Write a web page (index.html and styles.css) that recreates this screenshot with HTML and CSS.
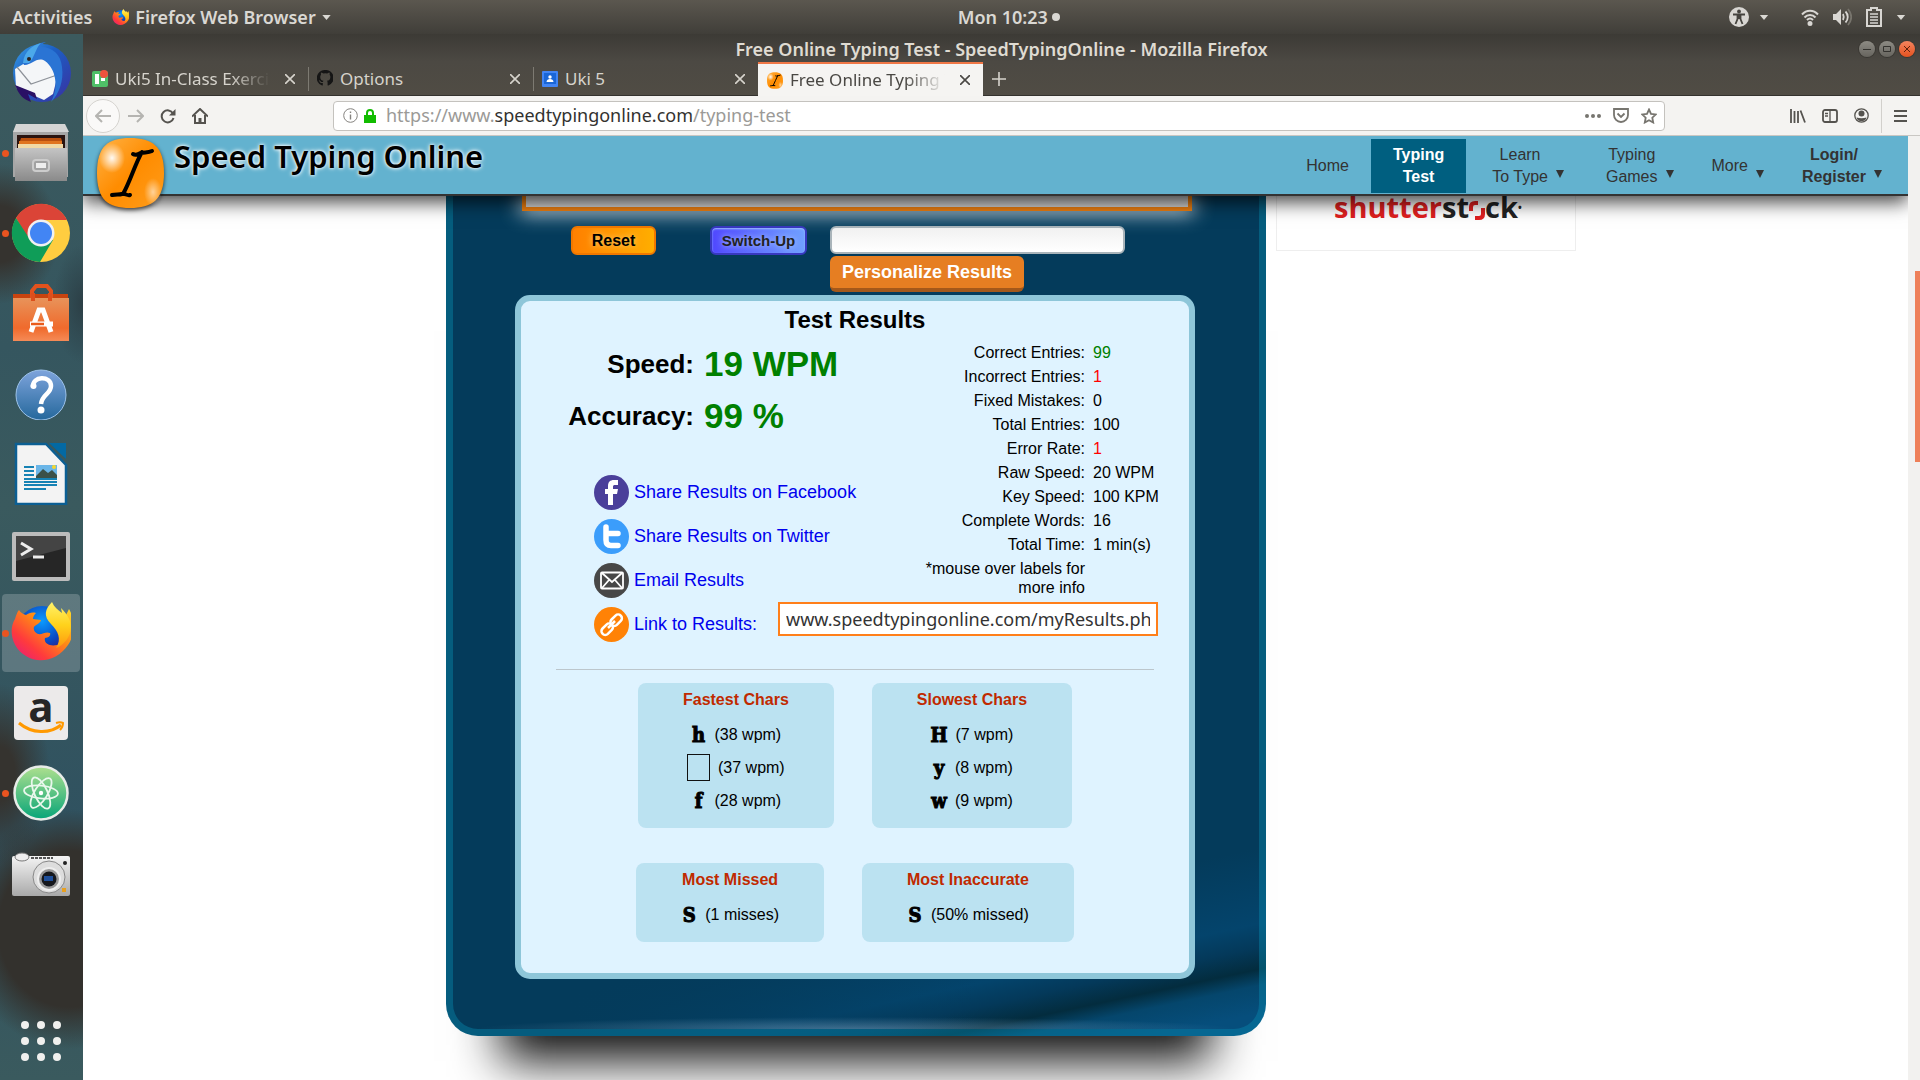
FILE: index.html
```html
<!DOCTYPE html>
<html lang="en">
<head>
<meta charset="utf-8">
<title>Free Online Typing Test - SpeedTypingOnline</title>
<link rel="stylesheet" href="styles.css">
</head>
<body>
<svg width="0" height="0" class="defs" aria-hidden="true">
  <defs>
    <linearGradient id="orangeKey" x1="0" y1="0" x2="1" y2="1"><stop offset="0" stop-color="#ffb347"/><stop offset=".5" stop-color="#ff8c00"/><stop offset="1" stop-color="#ff9d1c"/></linearGradient>
    <radialGradient id="shine"><stop offset="0" stop-color="#fff" stop-opacity=".95"/><stop offset="1" stop-color="#fff" stop-opacity="0"/></radialGradient>
    <linearGradient id="foxBody" x1="1" y1="0" x2="0" y2="1"><stop offset="0" stop-color="#ffdf2b"/><stop offset=".4" stop-color="#ff8a16"/><stop offset=".7" stop-color="#ff3b3c"/><stop offset="1" stop-color="#e31587"/></linearGradient>
    <linearGradient id="foxTail" x1="0" y1="0" x2="0" y2="1"><stop offset="0" stop-color="#fff36b"/><stop offset=".5" stop-color="#ffd21c"/><stop offset="1" stop-color="#ff980e"/></linearGradient>
    <radialGradient id="globe" cx=".5" cy=".3" r=".7"><stop offset="0" stop-color="#0a9bff"/><stop offset=".6" stop-color="#0a49c4"/><stop offset="1" stop-color="#3b1373"/></radialGradient>
    <linearGradient id="bird" x1="0" y1="0" x2="1" y2="1"><stop offset="0" stop-color="#3aa0e8"/><stop offset=".4" stop-color="#1c5fc4"/><stop offset="1" stop-color="#3a2fa0"/></linearGradient>
    <linearGradient id="steel" x1="0" y1="0" x2="0" y2="1"><stop offset="0" stop-color="#c4c4c4"/><stop offset="1" stop-color="#8a8a8a"/></linearGradient>
    <linearGradient id="bag" x1="0" y1="0" x2="0" y2="1"><stop offset="0" stop-color="#e8935a"/><stop offset=".7" stop-color="#f06a2c"/><stop offset="1" stop-color="#f58b57"/></linearGradient>
    <linearGradient id="help" x1="0" y1="0" x2="0" y2="1"><stop offset="0" stop-color="#7ea4dc"/><stop offset="1" stop-color="#25689c"/></linearGradient>
    <linearGradient id="atom" x1="0" y1="0" x2="0" y2="1"><stop offset="0" stop-color="#aee08e"/><stop offset="1" stop-color="#07a578"/></linearGradient>
    <linearGradient id="cam" x1="0" y1="0" x2="0" y2="1"><stop offset="0" stop-color="#f4f4f4"/><stop offset="1" stop-color="#a9a9a9"/></linearGradient>
    <symbol id="firefox" viewBox="0 0 60 62">
      <circle cx="31" cy="29" r="25" fill="url(#globe)"/>
      <path d="M8 8c2 3 4 4 7 5 3-2 6-3 10-2-2 2-3 4-3 6l8 1c0 3-6 5-7 7-1 3 1 6 4 7 4 1 8-3 12-1 1 2-1 5-5 5-2 7 9 10 16 5 6-4 6-12 1-20l7-14c7 12 5 28-1 36-9 14-28 20-42 11C1 46-3 28 4 17c1-3 2-7 4-9z" fill="url(#foxBody)"/>
      <path d="M41 0c-7 7-9 14-1 22 7 7 11 15 5 24 7-2 15-11 15-21 0-7-4-13-10-19l1 5c-4-3-8-6-10-11z" fill="url(#foxTail)"/>
    </symbol>
    <symbol id="key" viewBox="0 0 67 70">
      <path d="M33 0c22 0 34 8 34 35S55 70 33 70 0 62 0 35 11 0 33 0z" fill="url(#orangeKey)"/>
      <ellipse cx="15" cy="20" rx="13" ry="15" fill="url(#shine)"/><ellipse cx="56" cy="54" rx="9" ry="14" fill="url(#shine)" opacity=".6"/>
      <path d="M36 16c3 2 5 0 8-1 4-1 7 0 11-2M45 14C38 26 33 44 26 56M15 57c4-1 7 0 10-1 3-1 5 2 8 1" fill="none" stroke="#000" stroke-width="4" stroke-linecap="round"/>
    </symbol>
    <symbol id="close" viewBox="0 0 10 10"><path d="M0 0l10 10M10 0L0 10" fill="none" stroke="currentColor" stroke-width="1.6"/></symbol>
    <symbol id="caret" viewBox="0 0 10 6"><path d="M0 0h10L5 6z" fill="currentColor"/></symbol>
  </defs>
</svg>

<header class="topbar">
  <div class="topbar-left">
    <button class="plain">Activities</button>
    <button class="plain app-menu"><svg width="17" height="17"><use href="#firefox"/></svg>Firefox Web Browser<svg width="9" height="5"><use href="#caret"/></svg></button>
  </div>
  <button class="plain clock">Mon 10:23<span class="dot"></span></button>
  <div class="topbar-right">
    <svg width="20" height="20" viewBox="0 0 20 20"><circle cx="10" cy="10" r="10" fill="#d8d6d2"/><g stroke="#45433e" stroke-width="1.8" fill="none"><path d="M4 7.500h12M10 8v4M8.500 8v4L6.500 17M11.500 8v4l2 5"/></g><circle cx="10" cy="4.500" r="1.900" fill="#45433e"/></svg>
    <svg class="caret-a" width="10" height="5"><use href="#caret"/></svg>
    <svg width="18" height="17" viewBox="0 0 18 17" fill="none" stroke="#d8d6d2" stroke-width="2"><path d="M1 5.500c4.500-5 11.500-5 16 0M3.500 8.500c3-3.500 8-3.500 11 0M6 11c2-2 4-2 6 0"/><circle cx="9" cy="14.500" r="1.500" fill="#d8d6d2"/></svg>
    <svg width="19" height="18" viewBox="0 0 19 18"><path d="M0 6h3l5-5v16l-5-5H0z" fill="#d8d6d2"/><path d="M10 6c1 2 1 4 0 6M12.500 3.500c3 3 3 8 0 11" fill="none" stroke="#d8d6d2" stroke-width="1.800"/><path d="M15 1c4 5 4 11 0 16" fill="none" stroke="#77746c" stroke-width="1.800"/></svg>
    <svg width="16" height="20" viewBox="0 0 16 20"><path d="M5 1h6v2h4v16H1V3h4z" fill="none" stroke="#d8d6d2" stroke-width="2"/><path d="M4 7h8M4 10h8M4 13h8M4 16h8" stroke="#d8d6d2" stroke-width="1.600"/></svg>
    <svg width="10" height="5"><use href="#caret"/></svg>
  </div>
</header>

<div class="desktop">
  <nav class="dock" aria-label="Dock">
    <button class="dock-item" aria-label="Thunderbird"><svg width="64" height="64" viewBox="0 0 64 64"><circle cx="33" cy="32" r="29" fill="url(#bird)"/><path d="M6 28l10-6 22-7 12 14-6 24-9 6-28-12z" fill="#f4f6f8"/><path d="M8 26l14 17 26-9" fill="none" stroke="#8d9299" stroke-width="1.200"/><path d="M14 22C15 10 26 2 37 1c-4 2-5 3-5 5 12 0 20 8 21 20 2 14-3 27-11 35 8-15 5-33-6-41-8-5-14 5-21 4z" fill="#2a74d4"/><path d="M14 22C15 10 24 4 32 2c-6 6-6 14-12 20z" fill="#4ba8ea"/><circle cx="20" cy="18" r="2" fill="#2b2320"/><path d="M6 44c4 10 8 14 16 17l-3-8 9 5-2-6z" fill="#2a1065"/></svg></button>
    <button class="dock-item running" aria-label="Files"><svg width="60" height="60" viewBox="0 0 60 60"><path d="M5 3h48l4 6v45H2V9z" fill="#a6a6a6"/><path d="M5 1h49l4 8H2z" fill="#d4d4d4"/><path d="M6 12h48v14H6z" fill="#2a1410"/><path d="M10 15h40l1 3H9z" fill="#b9500f"/><path d="M8 18h43v3H8z" fill="#e0741f"/><path d="M7 21h45v4H7z" fill="#f1d9a5"/><path d="M4 25h52v33H4z" fill="url(#steel)"/><rect x="22" y="37" width="16" height="11" rx="3" fill="#a2a2a2" stroke="#ccc" stroke-width="2"/><rect x="25" y="40" width="10" height="5" fill="#eee"/></svg></button>
    <button class="dock-item running" aria-label="Chrome"><svg width="60" height="60" viewBox="0 0 60 60"><circle cx="30" cy="30" r="29" fill="#ffcd40"/><path d="M5 15A29 29 0 0 1 56 17H30L17 36z" fill="#db4437"/><path d="M5 15A29 29 0 0 0 29 59l13-22-24-2z" fill="#0f9d58"/><circle cx="30" cy="30" r="13.500" fill="#f1f1f1"/><circle cx="30" cy="30" r="11" fill="#4285f4"/></svg></button>
    <button class="dock-item" aria-label="Ubuntu Software"><svg width="60" height="60" viewBox="0 0 60 60"><path d="M2 11h55v6H2z" fill="#c8430f"/><path d="M21 18V8l4-5h11l4 5v10" fill="none" stroke="#e2521d" stroke-width="4"/><path d="M2 15h56v43H2z" fill="url(#bag)"/><path d="M22 18v-8M39 18v-8" stroke="#dd4f1c" stroke-width="4"/><path d="M20 49l8-22h4l8 22M19 41h23" stroke="#fff" stroke-width="5" fill="none"/><path d="M20 41h13" stroke="#ea5b1b" stroke-width="2.500"/></svg></button>
    <button class="dock-item" aria-label="Help"><svg width="54" height="54" viewBox="0 -1 54 54"><circle cx="27" cy="28" r="25" fill="url(#help)" stroke="#9cc2ea"/><path d="M19 20c-1-11 18-12 18-1 0 8-9 8-10 18" fill="none" stroke="#fff" stroke-width="4.500"/><circle cx="19.500" cy="19" r="3" fill="#fff"/><circle cx="27" cy="43" r="3.500" fill="#fff"/></svg></button>
    <button class="dock-item" aria-label="LibreOffice Writer"><svg width="54" height="64" viewBox="0 -1 54 64"><path d="M2 2h30l20 21v39H2z" fill="#f3f3f3" stroke="#0c5f93" stroke-width="2.500"/><path d="M35 1h17v16z" fill="#0369a3"/><path d="M10 25h10M10 29h10M10 33h10M10 37h33M10 40h33M10 43h33M10 47h22" stroke="#1682b4" stroke-width="2"/><path d="M22 23h21v13H22z" fill="#6bb6e8"/><path d="M22 34l7-7 5 4 4-3 5 5v3H22z" fill="#3b5148"/><circle cx="40" cy="25" r="2" fill="#f7d72b"/></svg></button>
    <button class="dock-item" aria-label="Terminal"><svg width="60" height="60" viewBox="0 -8 60 60"><rect x="1" y="1" width="58" height="49" rx="2" fill="#bcbcbc"/><rect x="5" y="5" width="50" height="41" fill="#262626"/><path d="M5 5h50v12L5 30z" fill="#444"/><path d="M10 12l10 6-10 6" fill="none" stroke="#eee" stroke-width="3"/><path d="M22 26h11" stroke="#eee" stroke-width="3"/></svg></button>
    <button class="dock-item running active" aria-label="Firefox"><svg width="60" height="62"><use href="#firefox"/></svg></button>
    <button class="dock-item" aria-label="Amazon"><svg width="54" height="54" viewBox="0 0 54 54"><rect width="54" height="54" rx="4" fill="#eceaea"/><text x="27" y="36" text-anchor="middle" class="amazon-a">a</text><path d="M5 37c13 11 31 11 42 2" fill="none" stroke="#f90" stroke-width="3"/><path d="M42 37c3-1 5-1 7 0 0 2-1 5-3 7" fill="none" stroke="#f90" stroke-width="2"/></svg></button>
    <button class="dock-item running" aria-label="Atom"><svg width="56" height="56" viewBox="0 0 56 56"><circle cx="28" cy="28" r="26.500" fill="url(#atom)" stroke="#e8ece8" stroke-width="2.500"/><g fill="none" stroke="#e9f7ec" stroke-width="1.800"><ellipse cx="28" cy="27" rx="17" ry="6.500" transform="rotate(6 28 27)"/><ellipse cx="28" cy="28" rx="17" ry="6.500" transform="rotate(65 28 28)"/><ellipse cx="28" cy="28" rx="17" ry="6.500" transform="rotate(-58 28 28)"/></g><circle cx="28" cy="28" r="2.200" fill="#fff"/></svg></button>
    <button class="dock-item" aria-label="Camera"><svg width="60" height="46" viewBox="0 -2 60 46"><rect x="1" y="4" width="58" height="40" rx="2" fill="url(#cam)"/><ellipse cx="11" cy="5" rx="7" ry="4" fill="#eee" stroke="#777"/><path d="M20 6h22" stroke="#555" stroke-width="2" stroke-dasharray="3 1"/><circle cx="38" cy="25" r="16" fill="#ddd" stroke="#888"/><circle cx="38" cy="27" r="11" fill="#999" stroke="#eee" stroke-width="2"/><circle cx="38" cy="27" r="7.500" fill="#16181d"/><path d="M33 24h9v5h-9z" fill="#1f4f9a"/><circle cx="54" cy="11" r="2" fill="#222"/><path d="M51 36h4v4h-4z" fill="#e9a01f"/></svg></button>
    <button class="dock-item show-apps" aria-label="Show Applications"><svg width="40" height="40" viewBox="0 0 40 40" fill="#f0f0ee"><circle cx="4" cy="4" r="4"/><circle cx="20" cy="4" r="4"/><circle cx="36" cy="4" r="4"/><circle cx="4" cy="20" r="4"/><circle cx="20" cy="20" r="4"/><circle cx="36" cy="20" r="4"/><circle cx="4" cy="36" r="4"/><circle cx="20" cy="36" r="4"/><circle cx="36" cy="36" r="4"/></svg></button>
  </nav>

  <section class="window">
    <div class="titlebar">
      <span class="window-title">Free Online Typing Test - SpeedTypingOnline - Mozilla Firefox</span>
      <span class="window-buttons">
        <button class="wbtn" aria-label="Minimize"><svg width="8" height="8" viewBox="0 0 8 8"><path d="M0 4.500h8" stroke="#33322e"/></svg></button>
        <button class="wbtn" aria-label="Maximize"><svg width="8" height="8" viewBox="0 0 8 8"><path d="M.5 1.500h7v5h-7z" fill="none" stroke="#33322e"/></svg></button>
        <button class="wbtn wbtn-close" aria-label="Close"><svg width="6" height="6" viewBox="0 0 6 6"><path d="M0 0l6 6M6 0L0 6" stroke="#5b1f0c"/></svg></button>
      </span>
    </div>
    <div class="tabs" role="tablist">
      <div class="tab" role="tab"><svg width="16" height="17" viewBox="0 0 16 17"><rect y="1" width="16" height="16" rx="2" fill="#4fbf67"/><path d="M3 4h4v10H3zM9 8h4v3H9z" fill="#fff"/><circle cx="12" cy="4" r="4" fill="#f0523c"/></svg><span class="tab-label fade">Uki5 In-Class Exercise</span><button class="plain tab-close" aria-label="Close tab"><svg width="10" height="10"><use href="#close"/></svg></button></div>
      <div class="tab" role="tab"><svg width="16" height="17" viewBox="0 0 16 17"><path d="M8 0a8 8 0 0 0-3 15.500c.6.100.8-.2.800-.6v-2c-2.500.4-3-1-3-1-.5-1-1-1.500-1-1.500.9-.3 1.500.7 1.900 1.100.7.900 1.700.6 2.200.4.100-.6.400-1 .6-1.200C4.400 10.500 3.200 9.500 3.200 7c0-1 .3-1.600.8-2.200-.1-.4-.3-1.200.1-2.300 1 0 2 .8 2.300 1a8 8 0 0 1 3.800 0c1-.7 1.800-1 2.300-1 .4 1.100.2 1.900.1 2.300.5.600.8 1.200.8 2.200 0 2.500-1.400 3.500-3.400 3.700.4.300.6.900.6 1.700v2.500c0 .4.200.7.800.6A8 8 0 0 0 8 0z" fill="#151515"/></svg><span class="tab-label">Options</span><button class="plain tab-close" aria-label="Close tab"><svg width="10" height="10"><use href="#close"/></svg></button></div>
      <div class="tab" role="tab"><svg width="16" height="16" viewBox="0 0 16 16"><rect width="16" height="16" rx="1" fill="#4285f4"/><rect x="2" y="2" width="12" height="11" fill="#1a66d6"/><circle cx="8" cy="6" r="1.700" fill="#fff"/><path d="M4.500 11c0-4 7-4 7 0z" fill="#fff"/></svg><span class="tab-label">Uki 5</span><button class="plain tab-close" aria-label="Close tab"><svg width="10" height="10"><use href="#close"/></svg></button></div>
      <div class="tab tab-active" role="tab" aria-selected="true"><svg width="16" height="17"><use href="#key"/></svg><span class="tab-label fade">Free Online Typing Test</span><button class="plain tab-close" aria-label="Close tab"><svg width="10" height="10"><use href="#close"/></svg></button></div>
      <button class="plain new-tab" aria-label="New tab"><svg width="14" height="14" viewBox="0 0 14 14"><path d="M7 0v14M0 7h14" stroke="currentColor" stroke-width="1.600"/></svg></button>
    </div>
    <div class="toolbar">
      <button class="plain tool back" aria-label="Back"><svg width="16" height="14" viewBox="0 0 16 14" fill="none" stroke="#b5b4b1" stroke-width="2"><path d="M7 1L1 7l6 6M1 7h15"/></svg></button>
      <button class="plain tool" aria-label="Forward"><svg width="16" height="14" viewBox="0 0 16 14" fill="none" stroke="#b5b4b1" stroke-width="2"><path d="M9 1l6 6-6 6M15 7H0"/></svg></button>
      <button class="plain tool" aria-label="Reload"><svg width="16" height="16" viewBox="0 0 16 16"><path d="M13 5.500A6 6 0 1 0 13.500 10" fill="none" stroke="#55534f" stroke-width="2"/><path d="M15.500 1v6.500H9z" fill="#55534f"/></svg></button>
      <button class="plain tool" aria-label="Home"><svg width="16" height="16" viewBox="0 0 16 16" fill="none" stroke="#55534f" stroke-width="2"><path d="M0 8.500L8 1l8 7.500M3 7v8h10V7"/><path d="M8 15v-5" stroke-width="3"/></svg></button>
      <div class="urlbar">
        <svg width="15" height="15" viewBox="0 0 15 15"><circle cx="7.500" cy="7.500" r="6.800" fill="none" stroke="#85837f"/><path d="M7.500 6.500v5M7.500 3.500v1.600" stroke="#85837f" stroke-width="1.400"/></svg>
        <svg width="12" height="14" viewBox="0 0 12 14"><path d="M0 6h12v8H0z" fill="#12bc00"/><path d="M3 7V4a3 3 0 0 1 6 0v3" fill="none" stroke="#12bc00" stroke-width="2"/></svg>
        <div class="url">https://www.<b>speedtypingonline.com</b>/typing-test</div>
        <svg width="16" height="4" viewBox="0 0 16 4" fill="#77756f"><circle cx="2" cy="2" r="2"/><circle cx="8" cy="2" r="2"/><circle cx="14" cy="2" r="2"/></svg>
        <svg width="16" height="15" viewBox="0 0 16 15" fill="none" stroke="#77756f" stroke-width="1.800"><path d="M1 1h14v6a7 7 0 0 1-14 0z"/><path d="M4.500 5.500L8 9l3.500-3.500"/></svg>
        <svg width="16" height="16" viewBox="0 0 16 16" fill="none" stroke="#77756f" stroke-width="1.800"><path d="M8 1.500l2 4.300 4.800.6-3.500 3.300.9 4.800L8 12.200l-4.200 2.300.9-4.800L1.200 6.400 6 5.800z"/></svg>
      </div>
      <div class="toolbar-right">
        <svg width="16" height="14" viewBox="0 0 16 14" fill="none" stroke="#55534f" stroke-width="1.800"><path d="M1 0v14M4.500 2v12M8 2v12M10.500 1.500L15 13.500"/></svg>
        <svg width="16" height="14" viewBox="0 0 16 14" fill="none" stroke="#55534f" stroke-width="1.800"><rect x="1" y="1" width="14" height="12" rx="2"/><path d="M8 1v12M3 4.500h3M3 7h3" stroke-width="1.300"/></svg>
        <svg width="15" height="15" viewBox="0 0 15 15"><circle cx="7.500" cy="7.500" r="6.700" fill="none" stroke="#55534f" stroke-width="1.300"/><circle cx="7.500" cy="5.500" r="3" fill="#55534f"/><path d="M2.500 9.500c3 1 7 1 10 0-1 5-9 5-10 0z" fill="#55534f"/></svg>
        <span class="rule"></span>
        <svg width="13" height="12" viewBox="0 0 13 12"><path d="M0 1h13M0 6h13M0 11h13" stroke="#55534f" stroke-width="2"/></svg>
      </div>
    </div>

    <div class="viewport">
      <div class="page">
        <div class="site-header">
          <a class="logo" href="#"><svg class="logo-key" width="67" height="70"><use href="#key"/></svg><span>Speed Typing Online</span></a>
          <nav class="site-nav">
            <a href="#">Home</a>
            <a href="#" class="current">Typing<br>Test</a>
            <a href="#" class="has-menu">Learn<br>To Type</a>
            <a href="#" class="has-menu">Typing<br>Games</a>
            <a href="#" class="has-menu">More</a>
            <a href="#" class="has-menu strong">Login/<br>Register</a>
          </nav>
        </div>
        <div class="content">
          <main class="panel">
            <div class="test-text"></div>
            <div class="controls">
              <button class="reset">Reset</button>
              <button class="switch">Switch-Up</button>
              <div class="personalize">
                <input type="text" aria-label="Name for results">
                <button>Personalize Results</button>
              </div>
            </div>
            <section class="results">
              <h2>Test Results</h2>
              <div class="summary">
                <div class="left">
                  <dl class="scores">
                    <dt>Speed:</dt><dd>19 WPM</dd>
                    <dt>Accuracy:</dt><dd>99 %</dd>
                  </dl>
                  <div class="shares">
                    <a href="#"><svg width="35" height="35" viewBox="0 0 35 35"><circle cx="17.500" cy="17.500" r="17.500" fill="#4a3f9a"/><path d="M14 30V19h-3v-5h3v-3c0-4 2-6 6-6h4v5h-3c-1.500 0-2 .5-2 2v2h5l-1 5h-4v11z" fill="#fff"/></svg>Share Results on Facebook</a>
                    <a href="#"><svg width="35" height="35" viewBox="0 0 35 35"><circle cx="17.500" cy="17.500" r="17.500" fill="#3b9dfb"/><path d="M12 8v13c0 4 2 5.500 5 5.500h7M12 14.500h12" fill="none" stroke="#fff" stroke-width="5.500" stroke-linecap="round"/></svg>Share Results on Twitter</a>
                    <a href="#"><svg width="35" height="35" viewBox="0 0 35 35"><circle cx="17.500" cy="17.500" r="17.500" fill="#474747"/><g fill="none" stroke="#fff" stroke-width="1.800"><rect x="7" y="9.500" width="22" height="16" rx="1"/><path d="M8 10l10 9 10-9M8 25l7-8M28 25l-7-8"/></g></svg>Email Results</a>
                  </div>
                </div>
                <dl class="stats">
                  <dt>Correct Entries:</dt><dd class="good">99</dd>
                  <dt>Incorrect Entries:</dt><dd class="bad">1</dd>
                  <dt>Fixed Mistakes:</dt><dd>0</dd>
                  <dt>Total Entries:</dt><dd>100</dd>
                  <dt>Error Rate:</dt><dd class="bad">1</dd>
                  <dt>Raw Speed:</dt><dd>20 WPM</dd>
                  <dt>Key Speed:</dt><dd>100 KPM</dd>
                  <dt>Complete Words:</dt><dd>16</dd>
                  <dt>Total Time:</dt><dd>1 min(s)</dd>
                  <dt class="note">*mouse over labels for more info</dt>
                </dl>
              </div>
              <div class="shares link-row">
                <a href="#"><svg width="35" height="35" viewBox="0 0 35 35"><circle cx="17.500" cy="17.500" r="17.500" fill="#ff8206"/><g fill="none" stroke="#fff" stroke-width="2.500"><rect x="15.500" y="9.500" width="13" height="7.500" rx="3.700" transform="rotate(-45 22 13)"/><rect x="6.500" y="18.500" width="13" height="7.500" rx="3.700" transform="rotate(-45 13 22)"/><path d="M14 21l7-7"/></g></svg>Link to Results:</a>
                <input type="text" aria-label="Link to Results" value="www.speedtypingonline.com/myResults.ph">
              </div>
              <hr>
              <div class="cards">
                <div class="card"><h3>Fastest Chars</h3><p><b>h</b>(38 wpm)</p><p><b class="space"></b>(37 wpm)</p><p><b>f</b>(28 wpm)</p></div>
                <div class="card"><h3>Slowest Chars</h3><p><b>H</b>(7 wpm)</p><p><b>y</b>(8 wpm)</p><p><b>w</b>(9 wpm)</p></div>
              </div>
              <div class="cards">
                <div class="card"><h3>Most Missed</h3><p><b>S</b>(1 misses)</p></div>
                <div class="card"><h3>Most Inaccurate</h3><p><b>S</b>(50% missed)</p></div>
              </div>
            </section>
          </main>
          <aside class="ad"><a href="#"><span class="red">shutter</span>st<svg width="16" height="24" viewBox="0 0 16 24"><path d="M2 13V9q0-4 4-4h3M14 10v6q0 4-4 4H6" fill="none" stroke="#e1201f" stroke-width="4"/></svg>ck<sup>•</sup></a></aside>
        </div>
      </div>
      <div class="scrollbar"><div class="thumb"></div></div>
    </div>
  </section>
</div>
</body>
</html>
```
FILE: styles.css
```css
* { box-sizing: border-box; }
body {
  margin: 0;
  height: 100vh;
  display: flex;
  flex-direction: column;
  overflow: hidden;
  font-family: "Liberation Sans", Arial, sans-serif;
  font-size: 16px;
  color: #000;
}
svg { display: block; flex: none; }
.defs { position: absolute; }
button, input { font: inherit; }
.plain { background: none; border: 0; padding: 0; color: inherit; display: flex; align-items: center; }
dl, dd, h2, h3, p { margin: 0; }

/* Desktop top bar */
.topbar {
  height: 34px;
  flex: none;
  display: grid;
  grid-template-columns: 19fr auto 17fr;
  align-items: center;
  padding: 0 14px 0 12px;
  background: linear-gradient(#5b574f, #403e39);
  color: #dad8d3;
  font: 600 18px/34px "Noto Sans", "Open Sans", sans-serif;
}
.topbar-left { display: flex; gap: 20px; }
.app-menu { gap: 6px; }
.clock { gap: 4px; }
.dot { width: 8px; height: 8px; border-radius: 50%; background: #dad8d3; }
.topbar-right { display: flex; justify-content: flex-end; align-items: center; gap: 14px; }
.caret-a { margin: 0 18px 0 -4px; }

.desktop { flex: 1; min-height: 0; display: flex; }

/* Dock */
.dock {
  width: 83px;
  flex: none;
  display: flex;
  flex-direction: column;
  align-items: center;
  gap: 2px;
  padding-right: 1px;
  background:
    radial-gradient(ellipse 60px 70px at 0 200px, #35332f 40%, transparent),
    radial-gradient(ellipse 30px 60px at 83px 270px, #2c3f46, transparent),
    radial-gradient(ellipse 50px 90px at 0 740px, #35332f 30%, transparent),
    radial-gradient(ellipse 110px 120px at 70px 895px, #33312d 65%, transparent),
    linear-gradient(#3c5a5e, #35565f 30%, #3a5a5e 45%, #305260 75%, #3a5a5e);
}
.dock-item {
  position: relative;
  width: 78px;
  height: 78px;
  flex: none;
  display: grid;
  place-items: center;
  padding: 0;
  border: 0;
  border-radius: 4px;
  background: none;
}
.dock-item.active { background: rgba(255, 255, 255, .2); }
.dock-item.running::before {
  content: "";
  position: absolute;
  left: 0;
  top: 36px;
  width: 7px;
  height: 7px;
  border-radius: 50%;
  background: #e95420;
}
.show-apps { margin-top: auto; }
.amazon-a { font: bold 42px "Open Sans", sans-serif; fill: #262626; }

/* Browser window */
.window { flex: 1; min-width: 0; display: flex; flex-direction: column; }
.titlebar {
  height: 28px;
  flex: none;
  display: grid;
  grid-template-columns: 1fr auto 1fr;
  align-items: center;
  padding: 2px 5px 0;
  background: linear-gradient(#3c3a35, #4c4943);
  color: #dfdbd2;
  font: 600 18px/26px "Noto Sans", "Open Sans", sans-serif;
}
.window-title { grid-column: 2; }
.window-buttons { display: flex; justify-content: flex-end; gap: 4px; }
.wbtn {
  width: 16px;
  height: 16px;
  display: grid;
  place-items: center;
  padding: 0;
  border: 0;
  border-radius: 50%;
  background: linear-gradient(#8d8b84, #66645e);
  box-shadow: 0 0 0 1px #3a3833;
}
.wbtn-close { background: linear-gradient(#f4845f, #e4521f); }
.tabs {
  height: 34px;
  flex: none;
  display: flex;
  background: linear-gradient(#4c4943, #504c44);
  border-bottom: 1px solid #34322e;
  color: #d6d3cc;
  font: 17px/32px "Noto Sans", "Open Sans", sans-serif;
}
.tab { position: relative; width: 225px; display: flex; align-items: center; gap: 7px; padding: 0 13px 0 9px; }
.tab + .tab:not(.tab-active)::before {
  content: "";
  position: absolute;
  left: 0;
  top: 5px;
  width: 1px;
  height: 24px;
  background: #7d7a72;
}
.tab-active {
  margin-bottom: -1px;
  background: #f5f4f2;
  border-top: 2px solid #f07746;
  color: #4a4844;
}
.tab-label { flex: 1; min-width: 0; overflow: hidden; white-space: nowrap; }
.fade { mask-image: linear-gradient(to left, transparent 8px, #000 48px); }
.new-tab { margin-left: 9px; }
.toolbar {
  height: 40px;
  flex: none;
  display: flex;
  align-items: center;
  padding: 0 13px 0 3px;
  background: #f4f3f1;
  border-bottom: 1px solid #c9c7c3;
}
.tool { width: 32px; height: 32px; justify-content: center; }
.back { width: 34px; height: 34px; border: 1px solid #d5d3cf; border-radius: 50%; background: #faf9f8; }
.urlbar {
  width: 1332px;
  flex: 0 1 auto;
  height: 30px;
  display: flex;
  align-items: center;
  gap: 12px;
  margin-left: 117px;
  padding: 0 7px 0 9px;
  background: #fff;
  border: 1px solid #c4c2be;
  border-radius: 4px;
}
.urlbar svg:nth-child(2) { margin: 0 -2px 0 -6px; }
.url { flex: 1; color: #9b9a97; font: 18px/26px "Noto Sans", "Open Sans", sans-serif; padding-bottom: 2px; }
.url b { font-weight: 400; color: #33322f; }
.toolbar-right { display: flex; align-items: center; gap: 16px; margin-left: auto; }
.rule { width: 1px; height: 34px; background: #d2d0cc; margin: 0 -4px; }

/* Web page */
.viewport { flex: 1; min-height: 0; display: flex; background: #fff; }
.page { flex: 1; min-width: 0; overflow: hidden; }
.scrollbar { width: 12px; padding: 135px 0 0 7px; background: #f2f1ef; }
.thumb { height: 191px; background: #ee8059; }
.site-header {
  position: relative;
  z-index: 1;
  height: 60px;
  display: flex;
  justify-content: space-between;
  background: #63b2cf;
  border-bottom: 2px solid #333;
  box-shadow: 0 6px 18px rgba(0, 0, 0, .75);
}
.logo {
  display: flex;
  gap: 10px;
  padding: 2px 0 0 14px;
  color: #000;
  text-decoration: none;
  font: 600 31px/36px "Noto Sans", "Open Sans", sans-serif;
  text-shadow: 0 0 5px #fff, 0 0 3px #fff;
}
.logo-key { filter: drop-shadow(0 2px 2px rgba(0, 0, 0, .7)); }
.site-nav { display: flex; padding: 3px 10px 1px 0; line-height: 22px; }
.site-nav a {
  display: flex;
  align-items: center;
  padding: 0 22px;
  color: #333;
  text-align: center;
  text-decoration: none;
}
.site-nav .current { background: #005f80; color: #fff; font-weight: bold; }
.site-nav .has-menu { gap: 8px; padding: 0 16px 0 22px; }
.site-nav .current + .has-menu { padding: 0 20px 0 26px; }
.site-nav .has-menu::after {
  content: "";
  margin-top: 16px;
  border: solid transparent;
  border-width: 8px 4px 0;
  border-top-color: #333;
}
.site-nav .strong { font-weight: bold; }

.content { display: grid; grid-template-columns: 363fr 820px 642fr; }
.panel {
  grid-column: 2;
  padding: 0 64px 50px 62px;
  border: 7px solid rgba(8, 144, 180, .4);
  border-top: 0;
  border-radius: 0 0 32px 32px;
  background:
    radial-gradient(ellipse 380px 12px at 50% 100%, rgba(150, 185, 215, .4), transparent) no-repeat padding-box,
    linear-gradient(to right, #043b5b 15%, transparent 65%) no-repeat bottom / 100% 300px border-box,
    linear-gradient(168deg, #043b5b 60%, #04446c 76%, #04395a 81%, #032c3e 85.600%, #05466c 89%, #064e7c 95%) no-repeat bottom / 100% 300px border-box,
    #043b5b border-box;
  box-shadow: 0 80px 45px -55px #111;
}
.test-text {
  height: 15px;
  margin: 0 3px 0 7px;
  background: #d6d6d6;
  border: solid #f08010;
  border-width: 0 4px 4px;
  box-shadow: 0 0 20px 2px #dce9f0;
}
.controls { display: flex; align-items: flex-start; padding: 15px 0 3px 56px; }
.reset, .switch { height: 29px; padding: 0; border-radius: 6px; font-weight: bold; }
.reset {
  width: 85px;
  margin-right: 54px;
  border: 2px solid #f07800;
  background: linear-gradient(to right, #ff8000, #ffae00);
  color: #000;
  text-shadow: 0 0 6px #ffd27a;
}
.switch {
  width: 97px;
  margin-right: 23px;
  border: 2px solid #3838c0;
  background: linear-gradient(to right, #5048ff, #70a0ff);
  box-shadow: inset 0 1px 2px #9cc0ff;
  color: #222;
  font-size: 15px;
  text-shadow: 0 0 6px #b8d0ff;
}
.personalize { display: flex; flex-direction: column; align-items: flex-start; }
.personalize input {
  width: 295px;
  height: 28px;
  margin-bottom: 2px;
  border: 2px solid #a9b4ba;
  border-radius: 6px;
  background: linear-gradient(#f1f1f1, #fff);
}
.personalize button {
  height: 36px;
  padding: 0 12px;
  border: 0;
  border-bottom: 4px solid #a4581a;
  border-radius: 6px;
  background: #e67e22;
  color: #fff;
  font-size: 18px;
  font-weight: bold;
}
.results {
  padding: 5px 0 31px;
  border: 6px solid #8ec6d9;
  border-radius: 15px;
  background: #dff3ff;
}
.results h2 { text-align: center; font-size: 24px; line-height: 28px; }
.summary { display: flex; padding-top: 4px; }
.left { width: 400px; }
.scores { display: grid; grid-template-columns: 173px auto; column-gap: 10px; font-weight: bold; line-height: 52px; }
.scores dt { font-size: 26px; text-align: right; }
.scores dd { font-size: 35px; color: #008000; }
.shares { padding-left: 73px; }
.left .shares { padding-top: 28px; }
.shares a { display: flex; align-items: center; gap: 5px; height: 44px; color: #00e; font-size: 18px; text-decoration: none; }
.stats { display: grid; grid-template-columns: 164px auto; column-gap: 8px; grid-auto-rows: 24px; line-height: 24px; align-content: start; padding-top: 3px; }
.stats dt { text-align: right; }
.good { color: #008000; }
.bad { color: #f00; }
.stats .note { line-height: 19px; padding-top: 2px; }
.link-row { display: flex; align-items: flex-start; gap: 21px; }
.link-row input {
  width: 380px;
  height: 34px;
  padding: 0 6px;
  border: 2px solid #ff7f1a;
  background: #fff;
  color: #333;
  font: 18px "Noto Sans", "Open Sans", sans-serif;
}
.results hr { height: 1px; margin: 23px 35px 13px; border: 0; background: #bcc6cc; }
.cards { display: flex; justify-content: center; gap: 38px; }
.cards + .cards { margin-top: 35px; }
.card { padding: 5px 45px 11px; border-radius: 8px; background: #bbe2f1; text-align: center; }
.card h3 { margin-bottom: 6px; color: #c02a00; font-size: 16px; line-height: 24px; }
.card p { display: flex; justify-content: center; align-items: center; gap: 8px; height: 33px; }
.card b {
  min-width: 16px;
  font: bold 20px/24px "DejaVu Serif Condensed", "DejaVu Serif", serif;
  -webkit-text-stroke: 1px #000;
}
.card .space { width: 23px; height: 27px; border: 1px solid #111; }

.ad { justify-self: start; width: 300px; height: 55px; margin-left: 10px; padding-left: 57px; border: 1px solid #eee; border-top: 0; }
.ad a { display: flex; align-items: flex-end; height: 26px; color: #222; text-decoration: none; font: bold 29px/30px "Open Sans", sans-serif; }
.ad .red { color: #e1201f; }
.ad sup { font-size: 10px; }
```
